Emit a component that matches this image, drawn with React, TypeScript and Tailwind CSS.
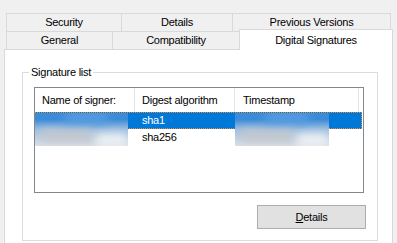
import React from "react";

const FONT = "font-['Liberation_Sans',Arial,sans-serif] text-[11px] tracking-[-0.25px] text-black";

function Tab({ label, w, last }: { label: string; w: string; last?: boolean }) {
  return (
    <div
      className={
        "flex h-[18px] items-center justify-center border-l border-t border-[#d9d9d9] bg-[#f0f0f0] " +
        w +
        (last ? " border-r" : "")
      }
    >
      {label}
    </div>
  );
}

function Blur({ className }: { className: string }) {
  return (
    <div className={"absolute overflow-hidden " + className}>
      <div className="absolute inset-0 bg-gradient-to-b from-[#3a8bd8] from-20% via-[#9dbfe0] via-50% to-[#dde1e6]" />
      <div className="absolute left-[5%] top-[50%] h-[12px] w-[60%] rounded-full bg-[#c4c7cc] blur-[5px]" />
      <div className="absolute left-[30%] top-[0%] h-[10px] w-[50%] rounded-full bg-[#5a9fe2] blur-[5px]" />
      <div className="absolute bottom-0 right-0 h-[12px] w-[35%] rounded-full bg-[#eef1f5] blur-[4px]" />
    </div>
  );
}

export default function App() {
  return (
    <div className={"h-[243px] w-[397px] overflow-hidden bg-[#f0f0f0] pl-[4px] pt-[13px] " + FONT}>
      <div className="ml-[2px] flex">
        <Tab label="Security" w="w-[115px]" />
        <Tab label="Details" w="w-[111px]" />
        <Tab label="Previous Versions" w="w-[159px]" last />
      </div>
      <div className="ml-[2px] flex h-[18px] items-start">
        <Tab label="General" w="w-[106px]" />
        <Tab label="Compatibility" w="w-[127px]" />
        <div className="relative z-10 -mt-[2px] flex h-[21px] w-[154px] items-center justify-center border-x border-t border-[#d9d9d9] bg-white">
          Digital Signatures
        </div>
      </div>

      <div className="h-[200px] w-[389px] border border-[#d9d9d9] bg-white pt-[15px]">
        <fieldset className="ml-[17px] h-[176px] w-[356px] border border-[#dcdcdc]">
          <legend className="ml-[6px] px-[2px] leading-[14px]">Signature list</legend>
          <div className="relative ml-[11px] mt-[8px] h-[106px] w-[330px] border border-[#828790]">
            <div className="flex h-[24px] items-stretch">
              <div className="flex w-[100px] items-center border-r border-[#e5e5e5] pl-[7px]">Name of signer:</div>
              <div className="flex w-[100px] items-center border-r border-[#e5e5e5] pl-[7px]">Digest algorithm</div>
              <div className="flex w-[124px] items-center border-r border-[#e5e5e5] pl-[8px]">Timestamp</div>
            </div>
            <div className="flex h-[17px] w-[327px] items-center border border-dotted border-[#e38a3c] bg-[#0078d7] text-white">
              <div className="w-[99px]" />
              <div className="pl-[7px]">sha1</div>
            </div>
            <div className="flex h-[17px] items-center">
              <div className="w-[100px]" />
              <div className="pl-[7px]">sha256</div>
            </div>
            <Blur className="left-0 top-[25px] h-[33px] w-[93px]" />
            <Blur className="left-[200px] top-[25px] h-[33px] w-[94px]" />
          </div>
          <div className="ml-[234px] mt-[12px] flex h-[24px] w-[109px] items-center justify-center border border-[#adadad] bg-[#e1e1e1]">
            <span>
              <span className="underline">D</span>etails
            </span>
          </div>
        </fieldset>
      </div>
    </div>
  );
}
